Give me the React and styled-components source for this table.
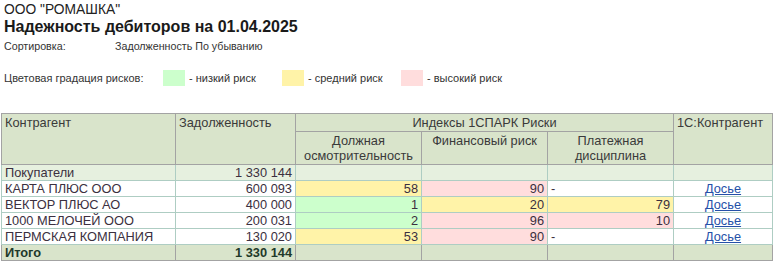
import React from 'react';
import styled, { createGlobalStyle } from 'styled-components';

const GlobalStyle = createGlobalStyle`
  body {
    margin: 0;
    background: #ffffff;
    font-family: "Liberation Sans", Arial, sans-serif;
    color: #333333;
  }
`;

const colors = {
  low: '#ccffcc',
  mid: '#fff3a8',
  high: '#ffdddd',
  head: '#d9e4cb',
  group: '#e6f0df',
  headLine: '#a3a3a3',
  bodyLine: '#aecdc3',
};

const Page = styled.div`
  width: 773px;
  height: 262px;
  overflow: hidden;
`;

const Intro = styled.div`
  padding: 2px 0 0 4px;
`;

const Company = styled.div`
  font-size: 13.8px;
  line-height: 15px;
  color: #222;
`;

const Title = styled.div`
  font-size: 16px;
  font-weight: bold;
  line-height: 20px;
  color: #1a1a1a;
`;

const SortRow = styled.div`
  display: grid;
  grid-template-columns: 111px auto;
  font-size: 10.7px;
  line-height: 13px;
  margin-top: 3px;
  color: #333;
`;

const Legend = styled.div`
  display: flex;
  align-items: center;
  height: 16px;
  margin: 17px 0 0 0;
  font-size: 11px;
  color: #333;
`;

const LegendLabel = styled.span`
  width: 159px;
`;

const LegendItem = styled.span`
  display: flex;
  align-items: center;
  width: 119px;
`;

const Swatch = styled.span`
  width: 22px;
  height: 16px;
  margin-right: 4px;
  background: ${p => colors[p.$level]};
`;

const Table = styled.table`
  margin: 27px 0 0 1px;
  border-collapse: collapse;
  table-layout: fixed;
  width: 772px;
  font-size: 12.8px;
`;

const HeadCell = styled.th`
  background: ${colors.head};
  border: 1px solid ${colors.headLine};
  font-weight: normal;
  color: #3a3a3a;
  text-align: ${p => p.$align || 'center'};
  vertical-align: top;
  padding: 1px 3px;
  line-height: 15px;
`;

const Row = styled.tr`
  height: 16px;
`;

const Cell = styled.td`
  border: 1px solid ${colors.bodyLine};
  background: ${p => (p.$level ? colors[p.$level] : p.$bg || '#ffffff')};
  text-align: ${p => p.$align || 'left'};
  padding: 0 3px;
  line-height: 14px;
  color: #3b3040;
  white-space: nowrap;
`;

const TotalCell = styled.td`
  border: 1px solid ${colors.headLine};
  background: ${colors.head};
  text-align: ${p => p.$align || 'left'};
  font-weight: bold;
  padding: 0 3px;
  line-height: 14px;
  color: #1f3a2a;
`;

const Link = styled.a`
  color: #2550a8;
  text-decoration: underline;
`;

const rows = [
  { name: 'КАРТА ПЛЮС ООО', debt: '600 093', due: [58, 'mid'], fin: [90, 'high'], pay: null },
  { name: 'ВЕКТОР ПЛЮС АО', debt: '400 000', due: [1, 'low'], fin: [20, 'mid'], pay: [79, 'mid'] },
  { name: '1000 МЕЛОЧЕЙ ООО', debt: '200 031', due: [2, 'low'], fin: [96, 'high'], pay: [10, 'high'] },
  { name: 'ПЕРМСКАЯ КОМПАНИЯ', debt: '130 020', due: [53, 'mid'], fin: [90, 'high'], pay: null },
];

function RiskCell({ value }) {
  if (!value) return <Cell>-</Cell>;
  return <Cell $level={value[1]} $align="right">{value[0]}</Cell>;
}

export default function App() {
  return (
    <Page>
      <GlobalStyle />
      <Intro>
        <Company>ООО "РОМАШКА"</Company>
        <Title>Надежность дебиторов на 01.04.2025</Title>
        <SortRow>
          <span>Сортировка:</span>
          <span>Задолженность По убыванию</span>
        </SortRow>
        <Legend>
          <LegendLabel>Цветовая градация рисков:</LegendLabel>
          <LegendItem><Swatch $level="low" />- низкий риск</LegendItem>
          <LegendItem><Swatch $level="mid" />- средний риск</LegendItem>
          <LegendItem><Swatch $level="high" />- высокий риск</LegendItem>
        </Legend>
      </Intro>
      <Table>
        <colgroup>
          <col style={{ width: 174 }} />
          <col style={{ width: 120 }} />
          <col style={{ width: 126 }} />
          <col style={{ width: 126 }} />
          <col style={{ width: 126 }} />
          <col style={{ width: 99 }} />
        </colgroup>
        <thead>
          <tr>
            <HeadCell rowSpan={2} $align="left">Контрагент</HeadCell>
            <HeadCell rowSpan={2} $align="left">Задолженность</HeadCell>
            <HeadCell colSpan={3}>Индексы 1СПАРК Риски</HeadCell>
            <HeadCell rowSpan={2} $align="left">1С:Контрагент</HeadCell>
          </tr>
          <tr>
            <HeadCell>Должная<br />осмотрительность</HeadCell>
            <HeadCell>Финансовый риск</HeadCell>
            <HeadCell>Платежная<br />дисциплина</HeadCell>
          </tr>
        </thead>
        <tbody>
          <Row>
            <Cell $bg={colors.group}>Покупатели</Cell>
            <Cell $bg={colors.group} $align="right">1 330 144</Cell>
            <Cell $bg={colors.group} />
            <Cell $bg={colors.group} />
            <Cell $bg={colors.group} />
            <Cell $bg={colors.group} />
          </Row>
          {rows.map(r => (
            <Row key={r.name}>
              <Cell>{r.name}</Cell>
              <Cell $align="right">{r.debt}</Cell>
              <RiskCell value={r.due} />
              <RiskCell value={r.fin} />
              <RiskCell value={r.pay} />
              <Cell $align="center"><Link href="#">Досье</Link></Cell>
            </Row>
          ))}
          <Row>
            <TotalCell>Итого</TotalCell>
            <TotalCell $align="right">1 330 144</TotalCell>
            <TotalCell />
            <TotalCell />
            <TotalCell />
            <TotalCell />
          </Row>
        </tbody>
      </Table>
    </Page>
  );
}
